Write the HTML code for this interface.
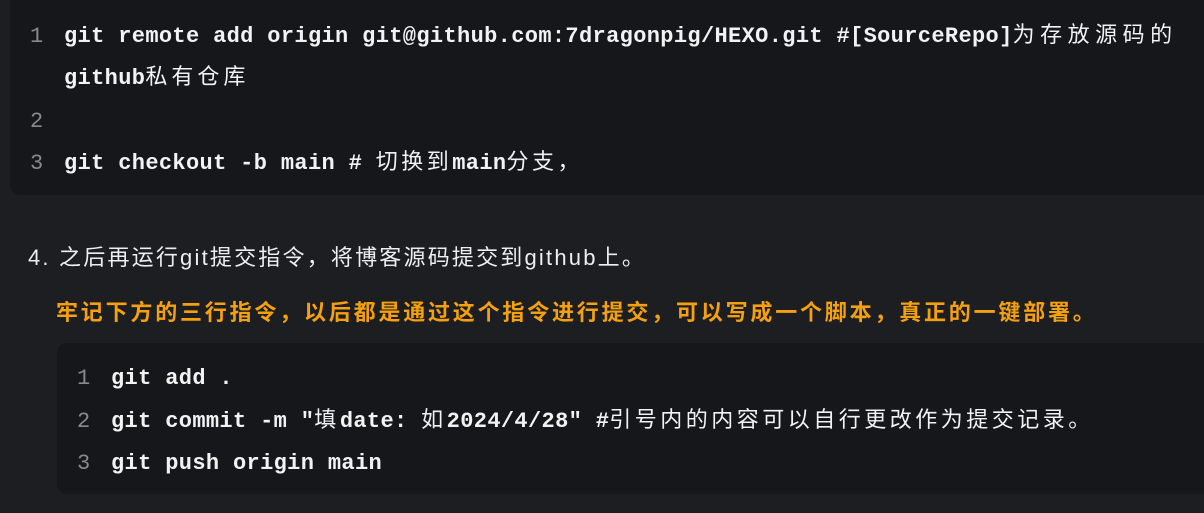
<!DOCTYPE html>
<html><head><meta charset="utf-8"><style>
body{margin:0;width:1204px;height:513px;background:#1c1e22;overflow:hidden;font-family:"Liberation Sans","Noto Sans CJK SC",sans-serif;color:#e6e6e6}
.code{position:absolute;background:#16171b;border-radius:10px;font-family:"Liberation Mono","Noto Sans CJK SC",monospace;font-weight:bold;font-size:22px;color:#f2f2f2;letter-spacing:0.35px}
.ln{position:absolute;color:#8a8a8a;font-weight:normal}
.l{position:absolute;white-space:nowrap;line-height:30px;height:30px}
.cj{font-family:"Noto Sans CJK SC",sans-serif;font-weight:normal;line-height:0;letter-spacing:3.5px}
</style></head><body>
<div class="code" style="left:10px;top:-10px;width:1210px;height:205px">
<div class="ln l" style="left:20px;top:32px">1</div>
<div class="l" style="left:54px;top:32px">git remote add origin git@github.com:7dragonpig/HEXO.git #[SourceRepo]<span class="cj" style="letter-spacing:5.5px">为存放源码的</span></div>
<div class="l" style="left:54px;top:74px">github<span class="cj" style="letter-spacing:4px">私有仓库</span></div>
<div class="ln l" style="left:20px;top:117px">2</div>
<div class="ln l" style="left:20px;top:159px">3</div>
<div class="l" style="left:54px;top:159px">git checkout -b main # <span class="cj">切换到</span>main<span class="cj">分支，</span></div>
</div>
<div class="l" style="position:absolute;left:28px;top:243px;font-size:22px;color:#eee;letter-spacing:2.2px">4. 之后再运行git提交指令，将博客源码提交到github上。</div>
<div class="l" style="position:absolute;left:56px;top:296px;font-size:22px;font-weight:bold;color:#f5a00f;font-family:'Noto Sans CJK SC',sans-serif;letter-spacing:2.8px">牢记下方的三行指令，以后都是通过这个指令进行提交，可以写成一个脚本，真正的一键部署。</div>
<div class="code" style="left:57px;top:343px;width:1160px;height:151px">
<div class="ln l" style="left:20px;top:21px">1</div>
<div class="l" style="left:54px;top:21px">git add .</div>
<div class="ln l" style="left:20px;top:64px">2</div>
<div class="l" style="left:54px;top:64px">git commit -m "<span class="cj">填</span>date: <span class="cj">如</span>2024/4/28" #<span class="cj">引号内的内容可以自行更改作为提交记录。</span></div>
<div class="ln l" style="left:20px;top:106px">3</div>
<div class="l" style="left:54px;top:106px">git push origin main</div>
</div>
</body></html>
